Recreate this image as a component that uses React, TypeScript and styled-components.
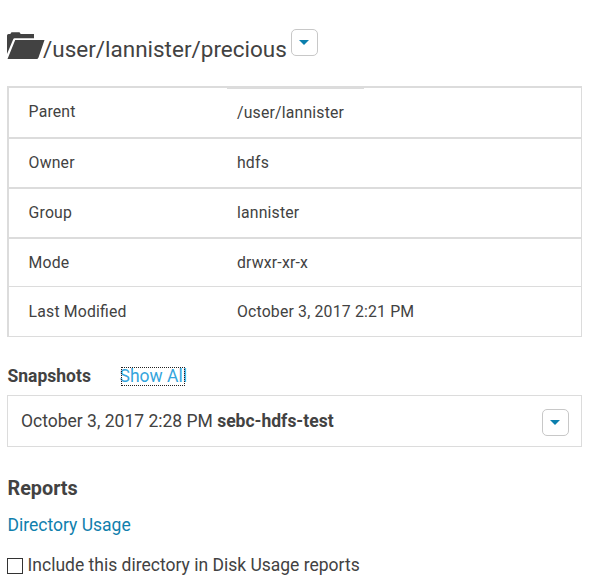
import React from "react";
import styled, { createGlobalStyle } from "styled-components";

const ink = "#424242";
const line = "#dcdcdc";
const link = "#1080ad";

const Global = createGlobalStyle`
  *, *::before, *::after { box-sizing: border-box; }
  body {
    margin: 0;
    background: #fff;
    color: ${ink};
    font-family: Roboto, "Liberation Sans", sans-serif;
    font-size: 17.5px;
    line-height: 24px;
  }
`;

const Page = styled.main`
  width: 596px;
  height: 583px;
  padding: 29px 14px 0 7px;
  overflow: hidden;
  white-space: nowrap;
`;

const TitleBar = styled.header`
  display: flex;
  align-items: flex-start;
  height: 57px;
`;

const FolderIcon = styled.svg`
  display: block;
  flex: none;
  margin-top: 3px;
  width: 38px;
  height: 28px;
  fill: ${ink};
`;

const Title = styled.h1`
  margin: 6px 0 0 -2px;
  width: 248px;
  font-size: 22.48px;
  font-weight: 400;
  line-height: 28px;
`;

const MenuButton = styled.button`
  display: flex;
  align-items: center;
  justify-content: flex-start;
  flex: none;
  width: 27px;
  height: 27px;
  padding: 0 0 0 7px;
  border: 1px solid #c8c8c8;
  border-radius: 5px;
  background: #fff;

  svg {
    display: block;
    fill: #0b7fad;
  }
`;

const Details = styled.dl`
  margin: 0;
  border: solid ${line};
  border-width: 2px 1px 1px 2px;
  font-size: 15.8px;
  letter-spacing: 0.18px;
  font-feature-settings: "liga" 1;
`;

const DetailRow = styled.div<{ $height: number; $rule: number }>`
  display: grid;
  grid-template-columns: 208.4px 1fr;
  align-items: center;
  height: ${(p) => p.$height}px;
  padding-left: 19.6px;
  border-bottom: ${(p) => p.$rule}px solid ${line};
`;

const Label = styled.dt<{ $raised?: boolean }>`
  padding-bottom: ${(p) => (p.$raised ? 2 : 0)}px;
`;

const Value = styled.dd`
  margin: 0;
`;

const ParentValue = styled(Value)`
  position: relative;
  height: 100%;
  line-height: 50px;

  &::before {
    content: "";
    position: absolute;
    top: 0;
    left: -10px;
    width: 137px;
    height: 1px;
    background: ${line};
  }
`;

const SectionBar = styled.div`
  display: flex;
  align-items: center;
  height: 24px;
  margin: 27px 0 7px;
`;

const SnapshotTitle = styled.h2`
  width: 114px;
  margin: 0;
  padding-left: 0.5px;
  font-size: 17.5px;
  font-weight: 700;
  line-height: 24px;
`;

const ShowAll = styled.a`
  width: 64px;
  height: 19px;
  color: #35a5dd;
  line-height: 18px;
  text-indent: -1.5px;
  outline: 1px dotted #222;
  outline-offset: -1px;
  text-decoration: none;
`;

const Snapshot = styled.section`
  display: flex;
  align-items: center;
  justify-content: space-between;
  height: 52px;
  padding: 0 12px 0 13px;
  border: 1px solid ${line};
`;

const SnapshotName = styled.p`
  margin: 0;
  padding-bottom: 1px;
`;

const ButtonSlot = styled.div`
  padding-top: 3px;
`;

const ReportsTitle = styled.h2`
  margin: 30px 0 0;
  padding-left: 0.5px;
  font-size: 19.8px;
  font-weight: 700;
  line-height: 24px;
`;

const ReportLink = styled.a`
  display: block;
  margin-top: 12px;
  padding-left: 0.5px;
  color: ${link};
  text-decoration: none;
`;

const CheckRow = styled.label`
  display: flex;
  align-items: center;
  gap: 4.6px;
  margin-top: 16px;
`;

const Checkbox = styled.input`
  appearance: none;
  width: 16px;
  height: 16px;
  margin: 2px 0 0;
  border: 1px solid #333;
  background: #fff;
`;

const Caret = () => (
  <svg width="10" height="5" viewBox="0 0 10 5">
    <path d="M0 0h10L5 5z" />
  </svg>
);

const rows = [
  { label: "Owner", value: "hdfs", height: 50, rule: 2 },
  { label: "Group", value: "lannister", height: 50, rule: 2 },
  { label: "Mode", value: "drwxr-xr-x", height: 48, rule: 1 },
  { label: "Last Modified", value: "October 3, 2017 2:21 PM", height: 49, rule: 0 },
];

export default function App() {
  return (
    <>
      <Global />
      <Page>
        <TitleBar>
          <FolderIcon viewBox="0 0 38 28">
            <path d="M0 22V3.5Q0 2 1.5 2H3.3L4.5 .3H12.5L13.7 2H27V6.3H7.6Q6.6 6.3 6.1 7.4z" />
            <path d="M8.2 8H37.5L31.5 25.5Q31 27 29.5 27H.5z" />
          </FolderIcon>
          <Title>/user/lannister/precious</Title>
          <MenuButton aria-label="Directory actions">
            <Caret />
          </MenuButton>
        </TitleBar>

        <Details>
          <DetailRow $height={51} $rule={2}>
            <Label $raised>Parent</Label>
            <ParentValue>/user/lannister</ParentValue>
          </DetailRow>
          {rows.map((row) => (
            <DetailRow key={row.label} $height={row.height} $rule={row.rule}>
              <Label>{row.label}</Label>
              <Value>{row.value}</Value>
            </DetailRow>
          ))}
        </Details>

        <SectionBar>
          <SnapshotTitle>Snapshots</SnapshotTitle>
          <ShowAll>Show All</ShowAll>
        </SectionBar>

        <Snapshot>
          <SnapshotName>
            October 3, 2017 2:28 PM <b>sebc-hdfs-test</b>
          </SnapshotName>
          <ButtonSlot>
            <MenuButton aria-label="Snapshot actions">
              <Caret />
            </MenuButton>
          </ButtonSlot>
        </Snapshot>

        <ReportsTitle>Reports</ReportsTitle>
        <ReportLink>Directory Usage</ReportLink>
        <CheckRow>
          <Checkbox type="checkbox" />
          Include this directory in Disk Usage reports
        </CheckRow>
      </Page>
    </>
  );
}
